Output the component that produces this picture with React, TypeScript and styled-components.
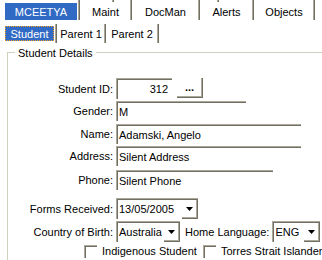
import React from 'react';
import styled, { createGlobalStyle } from 'styled-components';

const Global = createGlobalStyle`
  html, body { margin: 0; padding: 0; background: #ffffff; }
  body {
    width: 322px; height: 260px; overflow: hidden;
    font-family: "Liberation Sans", Arial, sans-serif;
    font-size: 11px; color: #000;
  }
  * { box-sizing: border-box; }
`;

const Screen = styled.div`
  width: 322px;
  height: 260px;
  overflow: hidden;
  background: #ffffff;
  position: relative;
`;

const TabStrip = styled.div<{ $h: number; $mt: number }>`
  display: flex;
  height: ${p => p.$h}px;
  margin-top: ${p => p.$mt}px;
  padding-left: 3px;
`;

const Tab = styled.div<{ $w: number }>`
  display: flex;
  width: ${p => p.$w}px;
  flex: none;
`;

const TabFace = styled.div<{ $active?: boolean; $focus?: boolean; $mt: number; $h: number }>`
  flex: 1;
  margin: ${p => p.$mt}px 1px 0 2px;
  height: ${p => p.$h}px;
  display: flex;
  align-items: center;
  justify-content: center;
  white-space: nowrap;
  background: ${p => (p.$active ? '#316ac5' : 'transparent')};
  color: ${p => (p.$active ? '#ffffff' : '#000000')};
  border: 1px ${p => (p.$focus ? 'dotted #f6a019' : 'solid transparent')};
`;

const TabSep = styled.div`
  width: 2px;
  flex: none;
  border-left: 1px solid #aca899;
  border-right: 1px solid #716f64;
`;

const Tick = styled.div<{ $x: number }>`
  position: absolute;
  top: 0;
  left: ${p => p.$x}px;
  width: 2px;
  height: 2px;
  border-left: 1px solid #aca899;
  border-right: 1px solid #716f64;
`;

const GroupBox = styled.div`
  margin: 9px 0 0 7px;
  width: 340px;
  height: 240px;
  border-top: 1px solid #d0d0bf;
  border-left: 1px solid #d0d0bf;
`;

const Legend = styled.div`
  width: fit-content;
  margin: -6px 0 0 7px;
  padding: 0 3px;
  line-height: 13px;
  background: #ffffff;
`;

const Form = styled.div`
  display: flex;
  flex-direction: column;
`;

const Row = styled.div<{ $mt: number; $h: number }>`
  display: flex;
  align-items: center;
  margin-top: ${p => p.$mt}px;
  height: ${p => p.$h}px;
`;

const Label = styled.div<{ $w?: number; $ml?: number }>`
  width: ${p => (p.$w ? `${p.$w}px` : 'auto')};
  margin-left: ${p => p.$ml ?? 0}px;
  margin-right: 3px;
  text-align: right;
  white-space: nowrap;
  flex: none;
`;

const TextBox = styled.div<{ $w: number; $right?: boolean }>`
  width: ${p => p.$w}px;
  height: 100%;
  flex: none;
  display: flex;
  align-items: center;
  justify-content: ${p => (p.$right ? 'flex-end' : 'flex-start')};
  padding: 0 ${p => (p.$right ? '4px' : '0')} 0 2px;
  background: #ffffff;
  border-top: 1px solid #aca899;
  border-left: 1px solid #aca899;
  box-shadow: inset 1px 1px 0 #716f64;
  white-space: nowrap;
  overflow: hidden;
`;

const Button = styled.div`
  width: 26px;
  height: 20px;
  margin-left: 5px;
  align-self: flex-start;
  flex: none;
  display: flex;
  align-items: center;
  justify-content: center;
  font-weight: bold;
  background: #ffffff;
  border-right: 1px solid #716f64;
  border-bottom: 1px solid #716f64;
  box-shadow: inset -1px -1px 0 #aca899;
  padding-bottom: 1px;
`;

const Combo = styled.div<{ $w: number }>`
  width: ${p => p.$w}px;
  height: 100%;
  flex: none;
  display: flex;
  align-items: stretch;
  background: #ffffff;
  border-top: 1px solid #aca899;
  border-left: 1px solid #aca899;
  box-shadow: inset 1px 1px 0 #716f64;
`;

const ComboText = styled.div`
  flex: 1;
  display: flex;
  align-items: center;
  padding-left: 2px;
  white-space: nowrap;
  overflow: hidden;
`;

const ComboBtn = styled.div`
  width: 16px;
  flex: none;
  display: flex;
  align-items: center;
  justify-content: center;
  margin: 1px 0 0 0;
  border-right: 1px solid #716f64;
  border-bottom: 1px solid #716f64;
  box-shadow: inset -1px -1px 0 #aca899;
`;

const CheckItem = styled.div<{ $w?: number; $ml?: number }>`
  display: flex;
  align-items: center;
  width: ${p => (p.$w ? `${p.$w}px` : 'auto')};
  margin-left: ${p => p.$ml ?? 0}px;
  flex: none;
  white-space: nowrap;
`;

const CheckBox = styled.div`
  width: 13px;
  height: 13px;
  margin-right: 5px;
  flex: none;
  background: #ffffff;
  border-top: 1px solid #aca899;
  border-left: 1px solid #aca899;
  box-shadow: inset 1px 1px 0 #716f64;
`;

const Arrow = () => (
  <svg width="7" height="4" viewBox="0 0 7 4">
    <polygon points="0,0 7,0 3.5,4" fill="#000" />
  </svg>
);

const ComboBox = ({ w, text }: { w: number; text: string }) => (
  <Combo $w={w}>
    <ComboText>{text}</ComboText>
    <ComboBtn>
      <Arrow />
    </ComboBtn>
  </Combo>
);

const topTabs = [
  { label: 'MCEETYA', w: 77, active: true },
  { label: 'Maint', w: 52 },
  { label: 'DocMan', w: 68 },
  { label: 'Alerts', w: 54 },
  { label: 'Objects', w: 61 },
];

const subTabs = [
  { label: 'Student', w: 54, active: true },
  { label: 'Parent 1', w: 49 },
  { label: 'Parent 2', w: 53 },
];

const LABEL_W = 105;

export default function App() {
  return (
    <Screen>
      <Global />
      <Tick $x={112} />
      <Tick $x={217} />
      <TabStrip $h={20} $mt={0}>
        {topTabs.map(t => (
          <Tab key={t.label} $w={t.w}>
            <TabFace $active={t.active} $mt={3} $h={17}>{t.label}</TabFace>
            <TabSep />
          </Tab>
        ))}
      </TabStrip>
      <TabStrip $h={19} $mt={4}>
        {subTabs.map(t => (
          <Tab key={t.label} $w={t.w}>
            <TabFace $active={t.active} $focus={t.active} $mt={2} $h={15}>{t.label}</TabFace>
            <TabSep />
          </Tab>
        ))}
      </TabStrip>
      <GroupBox>
        <Legend>Student Details</Legend>
        <Form>
          <Row $mt={18} $h={21}>
            <Label $w={LABEL_W}>Student ID:</Label>
            <TextBox $w={56} $right>312</TextBox>
            <Button>...</Button>
          </Row>
          <Row $mt={2} $h={20}>
            <Label $w={LABEL_W}>Gender:</Label>
            <TextBox $w={130}>M</TextBox>
          </Row>
          <Row $mt={3} $h={20}>
            <Label $w={LABEL_W}>Name:</Label>
            <TextBox $w={185}>Adamski, Angelo</TextBox>
          </Row>
          <Row $mt={2} $h={20}>
            <Label $w={LABEL_W}>Address:</Label>
            <TextBox $w={185}>Silent Address</TextBox>
          </Row>
          <Row $mt={4} $h={20}>
            <Label $w={LABEL_W}>Phone:</Label>
            <TextBox $w={157}>Silent Phone</TextBox>
          </Row>
          <Row $mt={8} $h={21}>
            <Label $w={LABEL_W}>Forms Received:</Label>
            <ComboBox w={82} text="13/05/2005" />
          </Row>
          <Row $mt={2} $h={21}>
            <Label $w={LABEL_W}>Country of Birth:</Label>
            <ComboBox w={64} text="Australia" />
            <Label $ml={5}>Home Language:</Label>
            <ComboBox w={48} text="ENG" />
          </Row>
          <Row $mt={2} $h={14}>
            <CheckItem $w={119} $ml={76}>
              <CheckBox />
              Indigenous Student
            </CheckItem>
            <CheckItem>
              <CheckBox />
              Torres Strait Islander
            </CheckItem>
          </Row>
        </Form>
      </GroupBox>
    </Screen>
  );
}
